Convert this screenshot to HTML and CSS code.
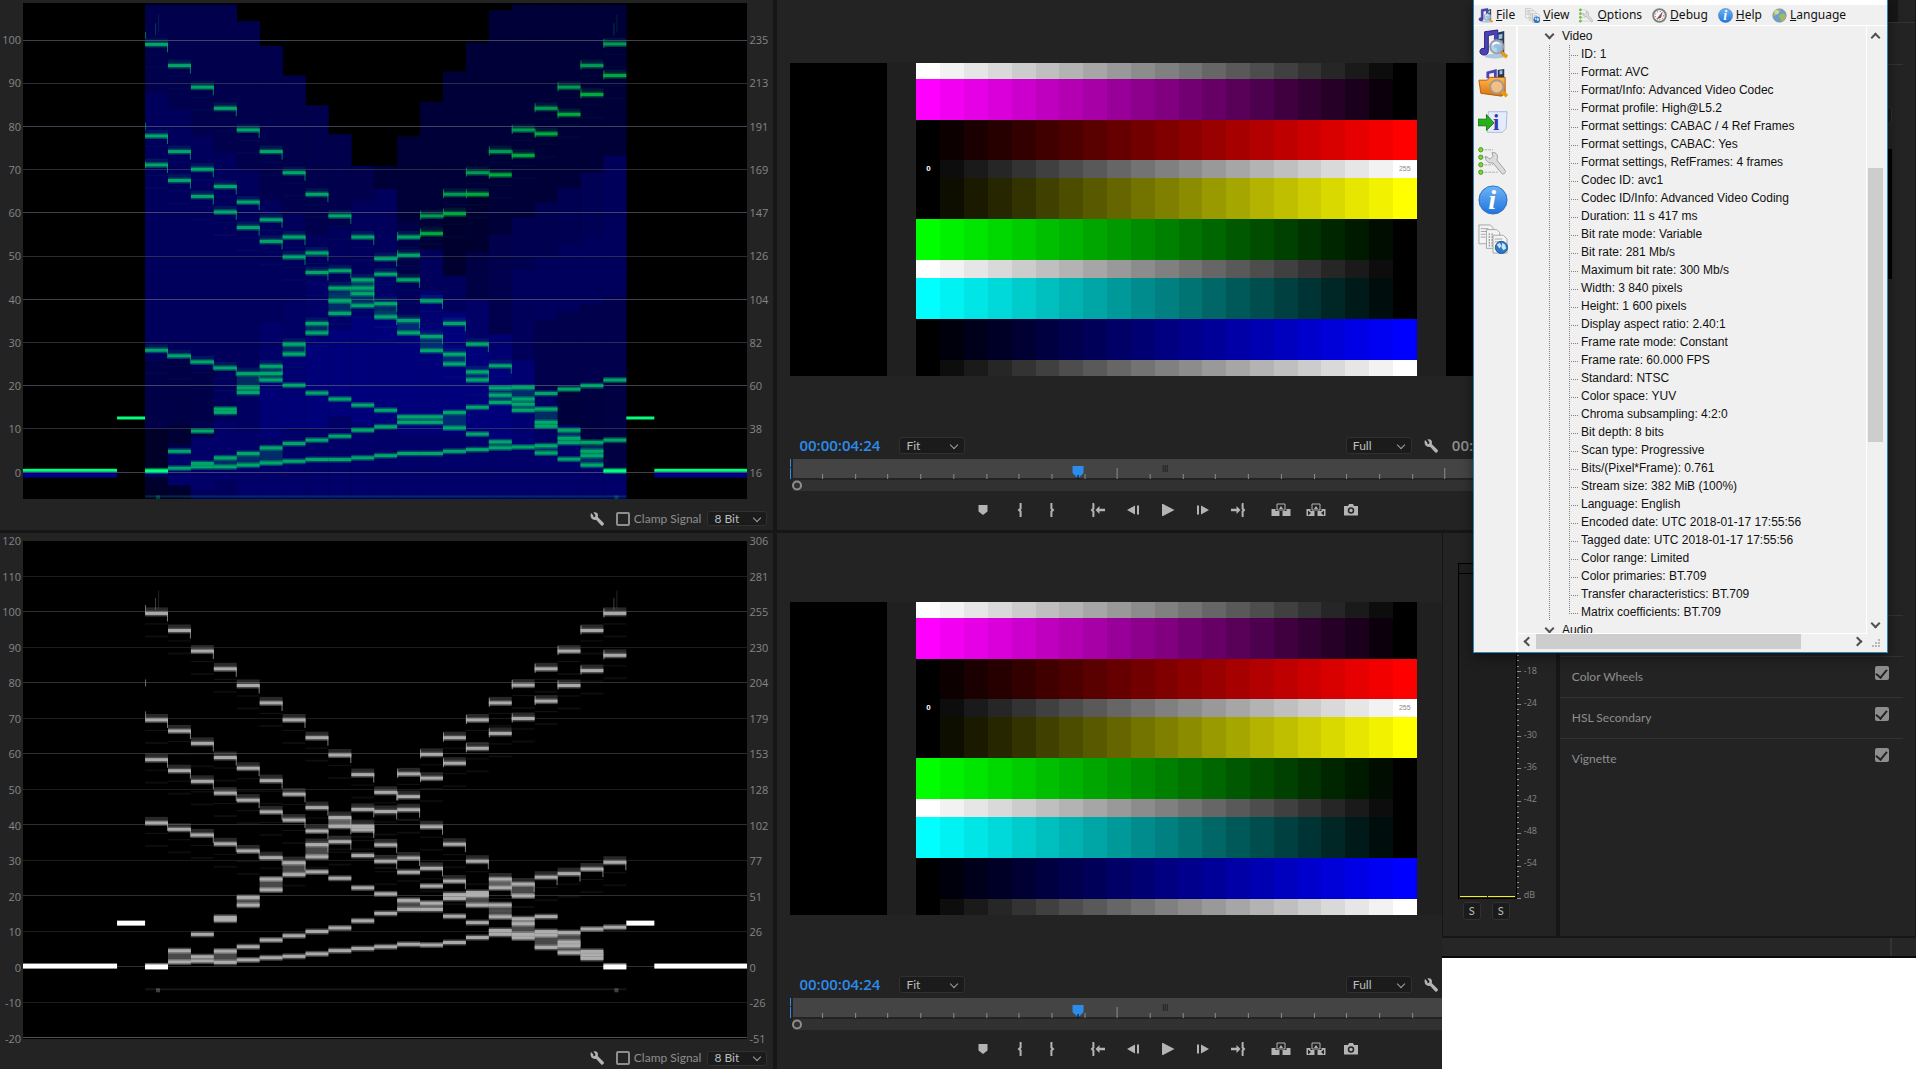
FILE: index.html
```html
<!DOCTYPE html>
<html lang="en">
<head>
<meta charset="utf-8">
<title>Lumetri Scopes</title>
<link rel="stylesheet" href="styles.css">
</head>
<body>
<svg class="defs" aria-hidden="true">
  <defs>
    <linearGradient id="g-blue" x1="0" y1="0" x2="0" y2="1"><stop offset="0" stop-color="#6fb4f5"/><stop offset="1" stop-color="#1f74dd"/></linearGradient>
    <linearGradient id="g-orange" x1="0" y1="0" x2="0" y2="1"><stop offset="0" stop-color="#ffb84d"/><stop offset="1" stop-color="#d9700c"/></linearGradient>
    <symbol id="wrench" viewBox="0 0 14 14"><path d="M1 1 3.200 3.200 3.500 5.200 5.200 4.800 5.400 3 3.400.6C5.500-.2 8 .9 8 3.400c0 .6-.1 1-.3 1.500l6 6.100c.9 1.500-.9 3.300-2.400 2.400L6 7.700C3 8.600.2 6 .6 3.200c0-.8.100-1.500.4-2.200z" fill="#b4b4b4"/></symbol>
    <symbol id="media" viewBox="0 0 32 32">
      <ellipse cx="18" cy="29" rx="11" ry="2.500" fill="#8fb6d8" opacity=".7"/>
      <path d="M20 4l8-2v26l-8-4z" fill="#2b3550"/><path d="M22 6l4-1v5l-4 1zM22 13l4-1v5l-4 1z" fill="#8fc6ec"/>
      <path d="M7 3l14-2v4L11 7v17c0 5-9 5-9 0 0-3 3-4 5-3z" fill="#4a43b8" stroke="#251f75"/>
      <path d="M17 4l4-1v17h-4z" fill="#4a43b8"/>
      <path d="M25 25l6 5" stroke="#e79a17" stroke-width="4"/>
      <circle cx="20" cy="19" r="7" fill="#a9d2ef" fill-opacity=".85" stroke="#9a9ea6" stroke-width="2"/>
      <path d="M16 17c1-3 5-3 6-1" stroke="#fff" stroke-width="2" fill="none"/>
    </symbol>
    <symbol id="folder" viewBox="0 0 32 32">
      <path d="M9 4l11-3v10H9z" fill="#4a43b8"/><path d="M12 6l5-1v6h-5z" fill="#f0f0f0"/><path d="M21 2l7-1v12h-7z" fill="#2b3550"/><path d="M23 3l3-.5v4l-3 .5z" fill="#8fc6ec"/>
      <path d="M1 13h9l2-3h17v17l-4 3L3 27z" fill="url(#g-orange)" stroke="#b35c08"/>
      <path d="M25 25l6 5" stroke="#e79a17" stroke-width="4"/>
      <circle cx="20" cy="20" r="7" fill="#f3c391" fill-opacity=".9" stroke="#a59a8c" stroke-width="2"/>
    </symbol>
    <symbol id="export" viewBox="0 0 32 32">
      <path d="M11 5h20l-1 18-4 4H10z" fill="#e4ecfb" stroke="#a9b7dd"/>
      <text x="16" y="25" font-family="Liberation Serif, serif" font-weight="bold" font-size="24" fill="#3738b0">i</text>
      <path d="M0 13h9V8l8 9-8 8v-5H0z" fill="#27b01c" stroke="#12790d"/>
    </symbol>
    <symbol id="options" viewBox="0 0 32 32">
      <g fill="#7fd23c" stroke="#3d9a16"><circle cx="3" cy="4" r="2.300"/><circle cx="3" cy="12" r="2.300"/><circle cx="3" cy="20" r="2.300"/><circle cx="3" cy="28" r="2.300"/></g>
      <path d="M7 4h9M7 12h4M7 20h9M7 28h14" stroke="#c4c4c4" stroke-width="1.500" stroke-dasharray="3 1"/>
      <path d="M8 11l5 3 3-3-1-4c5-1 7 4 5 8l9 11c1 3-2 5-4 3L16 18c-4 1-9-2-8-7z" fill="#dcdcdc" stroke="#9b9b9b"/>
    </symbol>
    <symbol id="info" viewBox="0 0 32 32">
      <circle cx="16" cy="16" r="15" fill="url(#g-blue)" stroke="#2a6dba"/>
      <text x="11" y="26" font-family="Liberation Serif, serif" font-style="italic" font-weight="bold" font-size="30" fill="#fff">i</text>
    </symbol>
    <symbol id="sheets" viewBox="0 0 32 32">
      <g fill="#f4f4f4" stroke="#a4a4a4"><path d="M1 1h12l3 3v17H1z"/><path d="M9 6h11l3 3v17H9z"/><path d="M16 12h11l4 4v15H16z"/></g>
      <path d="M3 5h8M3 8h6M3 11h5M3 14h5M18 16h8M18 19h6" stroke="#a0a0a0"/><path d="M12 10v14M15 10v14" stroke="#777" stroke-dasharray="2 1"/>
      <circle cx="25" cy="25" r="6.500" fill="#2b79c9" stroke="#1b528e"/><path d="M20 22l3-2 2 3-2 3zM26 20l3 2 1 4-3 2-2-3z" fill="#cfe6f6"/>
    </symbol>
    <symbol id="gauge" viewBox="0 0 32 32">
      <circle cx="16" cy="16" r="13.500" fill="#f7f7f7" stroke="#7d7d7d" stroke-width="4"/>
      <circle cx="16" cy="16" r="9" fill="none" stroke="#555" stroke-width="2" stroke-dasharray="2 4"/><path d="M11 23l10-13-2 10z" fill="#d62c1a" stroke="#444"/>
    </symbol>
    <symbol id="globe" viewBox="0 0 32 32">
      <circle cx="16" cy="16" r="14.500" fill="#6f9dc9" stroke="#73879a"/>
      <path d="M5 8c5-6 12-6 14-4l-4 6-6 2-2 6-5-3zM17 14l9-3 4 7-5 9-6 2-1-7-4-3z" fill="#a5b95c"/><circle cx="10" cy="9" r="5" fill="#fff" opacity=".45"/>
    </symbol>
    <symbol id="t-marker" viewBox="0 0 16 14"><path d="M3.500 2h9v6.500L8 12 3.500 8.500z"/></symbol>
    <symbol id="t-in" viewBox="0 0 16 14"><path d="M9.500.5H8.600V5.500L7 7l1.600 1.500v5h.9" class="ln"/></symbol>
    <symbol id="t-out" viewBox="0 0 16 14"><path d="M6.500.5h.9V5.500L9 7 7.400 8.500v5h-.9" class="ln"/></symbol>
    <symbol id="t-goin" viewBox="0 0 16 14"><path d="M4 .5H3.400V5.500L2 7l1.400 1.500v5H4" class="ln"/><path d="M5.500 7l4-4v2.700H15v2.600H9.500V11z"/></symbol>
    <symbol id="t-back" viewBox="0 0 16 14"><path d="M2 7l8-4.500v9zM12 2.500h2v9h-2z"/></symbol>
    <symbol id="t-play" viewBox="0 0 16 14"><path d="M2 1h1l11.500 6L3 13H2z"/></symbol>
    <symbol id="t-fwd" viewBox="0 0 16 14"><path d="M14 7L6 2.500v9zM2 2.500h2v9H2z"/></symbol>
    <symbol id="t-goout" viewBox="0 0 16 14"><path d="M12 .5h.6V5.500L14 7l-1.400 1.500v5H12" class="ln"/><path d="M10.500 7l-4-4v2.700H1v2.600h5.500V11z"/></symbol>
    <symbol id="t-lift" viewBox="0 0 20 14"><path d="M.5 6h4v2h4v5h-8zM11.500 8h4V6h4v7h-8z"/><path d="M6 1h8v6H6z" fill="none" stroke="#b4b4b4"/><path d="M10 3l2 3H8z"/></symbol>
    <symbol id="t-extract" viewBox="0 0 20 14"><path d="M.5 6h4v2h4v5h-8zM11.500 8h4V6h4v7h-8z"/><path d="M6 1h8v6H6z" fill="none" stroke="#b4b4b4"/><path d="M10 3l2 3H8z"/><path d="M2 7.500l3 2.500-3 2.500zM18 7.500L15 10l3 2.500z" fill="#232323"/></symbol>
    <symbol id="t-camera" viewBox="0 0 16 14"><path d="M1 3h4l1-2h4l1 2h4v9.500H1z"/><circle cx="8" cy="7.500" r="2.500" fill="none" stroke="#232323" stroke-width="1.500"/></symbol>
  </defs>
</svg>

<main class="desk">
  <section class="scope scope-top" aria-label="YC waveform">
    <div class="scale left"><span>100</span><span>90</span><span>80</span><span>70</span><span>60</span><span>50</span><span>40</span><span>30</span><span>20</span><span>10</span><span>0</span></div>
    <svg class="trace" id="trace-yc" viewBox="0 0 724 496" preserveAspectRatio="none"></svg>
    <div class="scale right"><span>235</span><span>213</span><span>191</span><span>169</span><span>147</span><span>126</span><span>104</span><span>82</span><span>60</span><span>38</span><span>16</span></div>
    <div class="scope-foot">
      <button class="icon" aria-label="Settings"><svg><use href="#wrench"/></svg></button>
      <label class="clamp"><input type="checkbox" class="box">Clamp Signal</label>
      <span class="drop small"><select aria-label="Bit depth"><option>8 Bit</option></select></span>
    </div>
  </section>

  <section class="monitor monitor-top" aria-label="Source monitor">
    <div class="monitor-body">
      <div class="viewer"><i class="black"></i><i></i><div class="chart"></div><i></i><i class="black"></i></div>
      <div class="controls">
        <span class="time">00:00:04:24</span>
        <span class="drop"><select aria-label="Zoom level"><option>Fit</option></select></span>
        <span class="drop push"><select aria-label="Playback resolution"><option>Full</option></select></span>
        <button class="icon" aria-label="Monitor settings"><svg><use href="#wrench"/></svg></button>
        <span class="time total">00:00:11:25</span>
      </div>
      <svg class="ruler" viewBox="0 0 751 32" preserveAspectRatio="none"></svg>
      <div class="transport"></div>
    </div>
  </section>

  <section class="scope scope-bottom" aria-label="Luma waveform">
    <div class="scale left"><span>120</span><span>110</span><span>100</span><span>90</span><span>80</span><span>70</span><span>60</span><span>50</span><span>40</span><span>30</span><span>20</span><span>10</span><span>0</span><span>-10</span><span>-20</span></div>
    <svg class="trace" id="trace-luma" viewBox="0 0 724 498" preserveAspectRatio="none"></svg>
    <div class="scale right"><span>306</span><span>281</span><span>255</span><span>230</span><span>204</span><span>179</span><span>153</span><span>128</span><span>102</span><span>77</span><span>51</span><span>26</span><span>0</span><span>-26</span><span>-51</span></div>
    <div class="scope-foot">
      <button class="icon" aria-label="Settings"><svg><use href="#wrench"/></svg></button>
      <label class="clamp"><input type="checkbox" class="box">Clamp Signal</label>
      <span class="drop small"><select aria-label="Bit depth"><option>8 Bit</option></select></span>
    </div>
  </section>

  <section class="monitor monitor-bottom" aria-label="Program monitor">
    <div class="monitor-body">
      <div class="viewer"><i class="black"></i><i></i><div class="chart"></div><i></i><i class="black"></i></div>
      <div class="controls">
        <span class="time">00:00:04:24</span>
        <span class="drop"><select aria-label="Zoom level"><option>Fit</option></select></span>
        <span class="drop push"><select aria-label="Playback resolution"><option>Full</option></select></span>
        <button class="icon" aria-label="Monitor settings"><svg><use href="#wrench"/></svg></button>
        <span class="time total"></span>
      </div>
      <svg class="ruler" viewBox="0 0 751 32" preserveAspectRatio="none"></svg>
      <div class="transport"></div>
    </div>
  </section>

  <section class="audio" aria-label="Audio meters">
    <div class="meter"><i></i><i></i></div>
    <svg class="meter-ticks" viewBox="0 0 5 336"></svg>
    <div class="meter-scale"><span></span><span></span><span></span><span>-18</span><span>-24</span><span>-30</span><span>-36</span><span>-42</span><span>-48</span><span>-54</span><span>dB</span></div>
    <div class="solo"><button>S</button><button>S</button></div>
  </section>

  <section class="lumetri" aria-label="Lumetri Color">
    <div class="lumetri-tabs"></div>
    <div class="lumetri-source"></div>
    <div class="lumetri-preset"></div>
    <div class="lumetri-wheel"></div>
    <div class="sections">
      <div class="section"></div>
      <div class="section"></div>
      <label class="section">Color Wheels<input type="checkbox" class="box" checked></label>
      <label class="section">HSL Secondary<input type="checkbox" class="box" checked></label>
      <label class="section">Vignette<input type="checkbox" class="box" checked></label>
    </div>
  </section>
  <div class="status"><i></i></div>
</main>

<div class="window" role="dialog" aria-label="MediaInfo">
  <div class="titlebar"></div>
  <nav class="menu">
    <button><svg><use href="#media"/></svg><span><u>F</u>ile</span></button>
    <button><svg><use href="#sheets"/></svg><span><u>V</u>iew</span></button>
    <button><svg><use href="#options"/></svg><span><u>O</u>ptions</span></button>
    <button><svg><use href="#gauge"/></svg><span><u>D</u>ebug</span></button>
    <button><svg><use href="#info"/></svg><span><u>H</u>elp</span></button>
    <button><svg><use href="#globe"/></svg><span><u>L</u>anguage</span></button>
  </nav>
  <div class="window-body">
    <div class="tools">
      <button aria-label="Open file"><svg><use href="#media"/></svg></button>
      <button aria-label="Open folder"><svg><use href="#folder"/></svg></button>
      <button aria-label="Export"><svg><use href="#export"/></svg></button>
      <button aria-label="Options"><svg><use href="#options"/></svg></button>
      <button aria-label="About"><svg><use href="#info"/></svg></button>
      <button aria-label="View"><svg><use href="#sheets"/></svg></button>
    </div>
    <div class="pane">
      <div class="tree">
        <div class="branch"><i class="chev down"></i>Video</div>
        <div class="trunk">
          <ul>
            <li>ID: 1</li>
            <li>Format: AVC</li>
            <li>Format/Info: Advanced Video Codec</li>
            <li>Format profile: High@L5.2</li>
            <li>Format settings: CABAC / 4 Ref Frames</li>
            <li>Format settings, CABAC: Yes</li>
            <li>Format settings, RefFrames: 4 frames</li>
            <li>Codec ID: avc1</li>
            <li>Codec ID/Info: Advanced Video Coding</li>
            <li>Duration: 11 s 417 ms</li>
            <li>Bit rate mode: Variable</li>
            <li>Bit rate: 281 Mb/s</li>
            <li>Maximum bit rate: 300 Mb/s</li>
            <li>Width: 3 840 pixels</li>
            <li>Height: 1 600 pixels</li>
            <li>Display aspect ratio: 2.40:1</li>
            <li>Frame rate mode: Constant</li>
            <li>Frame rate: 60.000 FPS</li>
            <li>Standard: NTSC</li>
            <li>Color space: YUV</li>
            <li>Chroma subsampling: 4:2:0</li>
            <li>Bit depth: 8 bits</li>
            <li>Scan type: Progressive</li>
            <li>Bits/(Pixel*Frame): 0.761</li>
            <li>Stream size: 382 MiB (100%)</li>
            <li>Language: English</li>
            <li>Encoded date: UTC 2018-01-17 17:55:56</li>
            <li>Tagged date: UTC 2018-01-17 17:55:56</li>
            <li>Color range: Limited</li>
            <li>Color primaries: BT.709</li>
            <li>Transfer characteristics: BT.709</li>
            <li>Matrix coefficients: BT.709</li>
          </ul>
        </div>
        <div class="branch"><i class="chev down"></i>Audio</div>
      </div>
      <div class="vbar"><i class="chev up"></i><i class="chev down"></i></div>
      <div class="hbar"><i class="chev prev"></i><i class="thumb"></i><i class="chev next"></i></div>
      <svg class="grip" viewBox="0 0 9 9"><path d="M6 0h2v2H6zM3 3h2v2H3zM6 3h2v2H6zM0 6h2v2H0zM3 6h2v2H3zM6 6h2v2H6z" fill="#b9b9b9"/></svg>
    </div>
  </div>
</div>
<script src="script.js"></script>
</body>
</html>
```
FILE: styles.css
```css
* { box-sizing: border-box; }

body {
  position: relative;
  margin: 0;
  min-height: 100vh;
  background: #fff;
  color: #8e8e8e;
  font: 12px/14px Lato, "Open Sans", sans-serif;
}

button, select, input { margin: 0; padding: 0; border: 0; font: inherit; color: inherit; background: none; }
ul { margin: 0; padding: 0; list-style: none; }
.defs { display: block; width: 0; height: 0; }

.desk {
  display: grid;
  grid-template-columns: 773fr 4px 664fr 1px 113fr 4px 356fr;
  grid-template-rows: 530px 3px 403px 2px 20px auto;
  padding-right: 4px;
  background: linear-gradient(#161616, #161616) 0 0 / calc(100% - 4px) 958px no-repeat;
}

.scope, .monitor, .audio, .lumetri { background: #232323; }

/* scopes */
.scope {
  grid-column: 1;
  display: grid;
  grid-template-columns: 23px 1fr 26px;
  box-shadow: 4px 0 #161616;
}
.scope-top { grid-row: 1; padding-top: 3px; }
.scope-bottom { grid-row: 3 / 7; padding-top: 8px; }
.trace { display: block; width: 100%; height: 496px; background: #000; }
.scope-bottom .trace { height: 498px; }
.scale {
  display: flex;
  flex-direction: column;
  justify-content: space-between;
  font: 11px/14px "Open Sans", sans-serif;
  color: #858585;
}
.scale.left { padding-right: 2px; text-align: right; margin-left: -4px; }
.scale.right { padding-left: 2px; }
.scope-top .scale { padding: 30px 2px 20px; }
.scope-bottom .scale { margin-top: -7px; margin-bottom: -7px; }
.scope-foot {
  grid-column: 1 / 4;
  display: flex;
  align-items: center;
  justify-content: flex-end;
  height: 30px;
  padding: 8px 6px 0 0;
}
.clamp { display: flex; align-items: center; gap: 4px; margin: 0 6px 0 12px; }
.icon { width: 14px; height: 14px; }
.icon svg { display: block; width: 14px; height: 14px; }

.box {
  display: grid;
  place-items: center;
  width: 14px;
  height: 14px;
  appearance: none;
  border: 2px solid #8e8e8e;
  border-radius: 2px;
}
.box:checked { background: #8e8e8e; }
.box:checked::before {
  content: "";
  width: 5px;
  height: 9px;
  border: solid #232323;
  border-width: 0 2px 2px 0;
  transform: translateY(-1px) rotate(40deg);
}

.drop {
  display: flex;
  align-items: center;
  justify-content: space-between;
  width: 66px;
  height: 17px;
  padding: 0 7px 0 6px;
  border: 1px solid #303030;
  border-radius: 3px;
  background: #1b1b1b;
  color: #bdbdbd;
}
.drop.small { width: 60px; height: 15px; padding-right: 6px; }
.drop select { flex: 1; appearance: none; height: 14px; line-height: 14px; }
.drop::after {
  content: "";
  width: 5px;
  height: 5px;
  border: solid #a0a0a0;
  border-width: 0 1px 1px 0;
  transform: translateY(-1px) rotate(45deg);
}

/* monitors */
.monitor { overflow: hidden; }
.monitor-top { grid-row: 1; grid-column: 3 / 6; padding-top: 63px; }
.monitor-bottom { grid-row: 3 / 7; grid-column: 3; padding-top: 69px; }
.monitor-body { padding: 0 13px; }
.monitor-bottom .monitor-body { width: calc(100% * 778 / 664); }
.viewer {
  display: grid;
  grid-template-columns: 97fr 29fr 500fr 29fr 97fr;
  height: 313px;
  background: #202020;
}
.viewer .black { background: #000; }
.chart { display: grid; grid-template-rows: 16fr 41fr 40fr 18fr 41fr 41fr 18fr 41fr 41fr 16fr; }
.chart-row { display: grid; grid-template-columns: repeat(21, 1fr); }
.chart-row span {
  display: grid;
  place-items: center;
  font: 7px/8px "Liberation Sans", sans-serif;
}
.chart-row .dark { color: #8a8a8a; }
.chart-row .lit { color: #fff; font-weight: bold; font-size: 8px; }

.controls {
  display: flex;
  align-items: center;
  height: 17px;
  margin-top: 61px;
  padding: 0 11px 0 9px;
}
.time { width: 80px; margin-right: 20px; font: 600 15px/17px "Open Sans", sans-serif; color: #2d8ceb; }
.time.total { margin: 0 0 0 14px; color: #8e8e8e; }
.push { margin: 0 12px 0 auto; }
.ruler { display: block; width: 100%; height: 32px; margin-top: 5px; }
.transport { display: flex; align-items: center; justify-content: center; height: 37px; }
.transport .set { display: flex; }
.transport .set + .set { margin-left: 12px; }
.transport .set:nth-child(2) { margin-left: 4px; }
.transport .set:nth-child(4) { margin-left: 8px; }
.transport button { display: grid; place-items: center; width: 35px; height: 14px; }
.transport .set:nth-child(2) button { width: 32px; }
.transport svg { display: block; width: 16px; height: 14px; fill: #b4b4b4; }
.transport .wide svg { width: 20px; }
.ln { fill: none; stroke: #b4b4b4; stroke-width: 2px; }

/* audio meters */
.audio {
  grid-row: 3;
  grid-column: 5;
  display: grid;
  grid-template-columns: 59px 5px 1fr;
  grid-template-rows: 336px 25px;
  padding: 30px 0 0 15px;
}
.meter {
  display: flex;
  align-items: flex-end;
  gap: 1px;
  padding: 0 1px 1px;
  border: 1px solid #000;
  background: linear-gradient(#000, #000) 0 9px / 100% 1px no-repeat #1e1e1e;
}
.meter i { flex: 1; height: 1px; background: #f2f20c; }
.meter-ticks { width: 5px; height: 336px; }
.meter-scale {
  display: flex;
  flex-direction: column;
  justify-content: space-between;
  padding: 6px 0 0 2px;
  height: 338px;
  font: 9px/12px "Open Sans", sans-serif;
  color: #858585;
}
.meter-scale span { height: 12px; }
.solo { display: flex; gap: 11px; padding: 3px 0 0 5px; grid-column: 1 / 4; }
.solo button {
  width: 18px;
  height: 18px;
  border: 1px solid #303030;
  border-radius: 3px;
  background: #1b1b1b;
  font-size: 11px;
  color: #bdbdbd;
}

/* lumetri */
.lumetri { grid-row: 1 / 4; grid-column: 7; margin-right: 1px; }
.lumetri-tabs { height: 23px; border-bottom: 1px solid #343434; background: linear-gradient(#161616, #161616) 0 0 / calc(100% - 17px) 100% no-repeat; }
.lumetri-source { height: 42px; margin-right: 12px; border-bottom: 1px solid #343434; }
.lumetri-preset { height: 17px; margin: 42px 23px 0 0; border: 1px solid #303030; border-radius: 3px; background: #1b1b1b; }
.lumetri-wheel { height: 130px; margin: 25px 23px 0 0; background: #000; }
.sections { padding: 335px 12px 0 0; }
.section {
  display: flex;
  align-items: center;
  justify-content: space-between;
  height: 41px;
  padding: 0 14px 0 12px;
  border-top: 1px solid #323232;
}
.section .box { transform: translateY(-4px); }
.section:first-child { visibility: hidden; height: 0; }
.status {
  grid-row: 5;
  grid-column: 4 / 8;
  display: flex;
  justify-content: flex-end;
  padding-right: 24px;
  border-bottom: 2px solid #080808;
  background: #262626;
}
.status i { width: 2px; background: #343434; }

/* floating window */
.window {
  position: absolute;
  top: 0;
  left: 76.72%;
  width: 415px;
  height: 653px;
  display: flex;
  flex-direction: column;
  border: 1px solid #2a86b8;
  border-top: 0;
  background: #f0f0f0;
  color: #101010;
  box-shadow: 0 4px 12px rgba(0, 0, 0, .45);
}
.titlebar { height: 5px; background: #fff; }
.menu {
  display: flex;
  gap: 10px;
  height: 21px;
  padding: 0 4px;
  border-bottom: 1px solid #fff;
  font: 12px/20px "Noto Sans", sans-serif;
}
.menu button { display: flex; align-items: center; gap: 3px; }
.menu svg { width: 15px; height: 15px; }
.window-body { flex: 1; display: flex; min-height: 0; }
.tools { display: flex; flex-direction: column; width: 44px; border-right: 2px solid #fff; }
.tools button { display: grid; align-items: start; justify-items: center; padding-top: 3px; width: 38px; height: 39px; }
.tools svg { width: 30px; height: 30px; }
.pane {
  flex: 1;
  display: grid;
  grid-template-columns: 1fr 18px;
  grid-template-rows: 1fr 18px;
  min-width: 0;
  min-height: 0;
  padding-right: 2px;
}
.tree {
  overflow: hidden;
  min-height: 0;
  padding-top: 1px;
  border-right: 1px solid #fff;
  border-bottom: 1px solid #fff;
  font: 12px/18px "Liberation Sans", sans-serif;
}
.branch { display: flex; align-items: center; gap: 8px; height: 18px; padding-left: 27px; }
.trunk { padding-left: 51px; background: repeating-linear-gradient(#808080 0 1px, transparent 1px 2px) 31px 0 / 1px 100% no-repeat; }
.trunk li {
  height: 18px;
  padding-left: 12px;
  white-space: nowrap;
  background:
    repeating-linear-gradient(#808080 0 1px, transparent 1px 2px) 0 0 / 1px 100% no-repeat,
    repeating-linear-gradient(90deg, #808080 0 1px, transparent 1px 2px) 0 10px / 9px 1px no-repeat;
}
.trunk li:last-child { background-size: 1px 10px, 9px 1px; }
.chev { display: block; flex: none; width: 7px; height: 7px; border: solid #505050; border-width: 0 2px 2px 0; }
.branch .chev { margin: 0 1px; }
.down { transform: translateY(-2px) rotate(45deg); }
.up { transform: translateY(2px) rotate(225deg); }
.prev { transform: rotate(135deg); }
.next { transform: rotate(-45deg); }
.vbar {
  display: flex;
  flex-direction: column;
  justify-content: space-between;
  align-items: center;
  padding: 6px 2px 5px 0;
  background: linear-gradient(#cdcdcd, #cdcdcd) 1px 142px / 15px 274px no-repeat;
}
.hbar { display: flex; align-items: center; gap: 4px; padding: 0 6px 3px 7px; }
.hbar .thumb { width: 265px; height: 15px; background: #cdcdcd; }
.hbar .next { margin-left: auto; }
.grip { width: 9px; height: 9px; margin: 5px 0 0 5px; }
```
FILE: script.js
```js
const NS = 'http://www.w3.org/2000/svg';
const COLS = 21;
const X0 = 122;
const STEP = 481 / COLS;

function rect(svg, x, y, w, h, fill, opacity = 1) {
  const r = document.createElementNS(NS, 'rect');
  Object.entries({ x, y, width: w, height: h, fill, 'fill-opacity': opacity }).forEach(([k, v]) => r.setAttribute(k, v));
  svg.appendChild(r);
}

/* levels of each step of the test chart, in IRE */
const YC = [
  [99.1, 77.9, 71.2, 28.3, 0.4], [94.2, 74.3, 67.6, 27, 4.9, 1], [89.2, 70.2, 63.9, 25.6, 9.6, 2.1, 1.3],
  [84.3, 66.2, 60.3, 24.2, 14.7, 13.9, 3.4, 1.3], [79.3, 62.6, 56.7, 22.9, 19.6, 18.5, 4.4, 1.7],
  [74.3, 58.5, 53.5, 24.6, 22.9, 21.4, 5.7, 2.2], [69.4, 54.5, 49.9, 29.7, 27.4, 20.2, 6.7, 2.6],
  [64.4, 50.8, 46.3, 34.5, 32.3, 18.4, 7.5, 3], [59.4, 46.7, 42.7, 39.7, 36.8, 17, 8.4, 3],
  [54.5, 44.6, 42.7, 41.4, 38.6, 15.6, 9.8, 3.4], [49.5, 45.9, 39.1, 36, 14.4, 10.6, 3.9],
  [54.5, 50.3, 44.6, 35.2, 32.3, 12.9, 11.6, 4.4], [59.4, 55.3, 39.7, 31.5, 28.2, 12.9, 11.6, 4.4],
  [64.4, 59.9, 34.5, 27.4, 25.1, 13.9, 10.3, 4.9], [69.4, 64.4, 29.7, 23.3, 21.4, 15.1, 8.9, 5.3],
  [74.3, 68.9, 24.7, 19.6, 17.9, 16.2, 7.1, 5.7], [79.3, 73.4, 19.7, 17, 15.8, 14.4, 5.9],
  [84.3, 78.4, 18.3, 14.7, 11.6, 10.7, 6.2, 4.5], [89.2, 82.9, 19.3, 9.8, 7.9, 6.9, 3.1],
  [94.2, 87.5, 20.1, 7, 4.9, 3.9, 1.7], [99.2, 91.9, 21.4, 7.5, 0.4]
];
const LUMA = [
  [99.6, 69.6, 58.4, 40.6, 0.3], [94.8, 66.5, 55.3, 38.8, 4.6, 1.4], [89, 63, 52.3, 37.2, 9.2, 2.9, 1.7],
  [84, 59, 49, 34.7, 14, 13.2, 4.5, 1.3], [79.3, 56, 47, 32.7, 19.6, 17.4, 5.7, 2],
  [74.4, 52.5, 43.7, 30.8, 24.8, 21.7, 7.6, 2.6], [69.6, 48.7, 41.4, 29.4, 26, 8.8, 3],
  [64.6, 44.9, 38.3, 34.5, 31, 26.8, 10, 3.7], [59.7, 42.1, 39.6, 35.3, 25, 11, 4.6],
  [54.2, 44.4, 39.6, 38.6, 31.4, 22.3, 13, 5.2], [49.2, 43.8, 34.4, 29.8, 20.6, 15.1, 5.7],
  [54.4, 48, 44.3, 30.7, 26.7, 18.8, 16.2, 6.4], [59.9, 53.2, 39.5, 27.8, 22.8, 18, 16.2, 6.2],
  [64.6, 57.4, 34.6, 24.2, 20.4, 19.3, 14.3, 6.9], [69.6, 61.6, 29.8, 21, 20.2, 17.4, 12.5, 8.3],
  [74.4, 65.8, 24.8, 22.3, 17.5, 14.1, 10.3, 9.2], [79.4, 70, 23.4, 20, 13.6, 12.2, 9.2, 8.2],
  [84, 74.9, 25.3, 14.2, 10, 9, 5.5], [89, 79.3, 26.3, 9.7, 7, 6, 4],
  [94.8, 83.5, 27.6, 10.7, 4.4, 3.4, 2.4], [99.6, 87.8, 29.5, 11.2, 0.3]
];

/* chroma fill per column: [upper limit, colour] pairs, top to bottom */
const A = '#00004c', B = '#00005c', C = '#00007a', D = '#000038', E = '#000068';
const CHROMA = [
  [[108.3, A], [88, B], [26, '#000048'], [10, '#000028'], [0, E], [-1, '#00002c']],
  [[108.3, A], [84, B], [26, '#000046'], [11, '#000034'], [6, E], [-3, '#000030']],
  [[108.3, A], [78, B], [24, '#000048'], [12, '#00004c'], [8, E], [-4, B]],
  [[108.3, A], [74, B], [16, '#000058'], [12, E], [-2, B]],
  [[104.5, A], [70, B], [20, '#000060'], [10, E]],
  [[98.7, A], [63, B], [35, E], [22, '#000074'], [8, E]],
  [[91.9, A], [60, B], [40, '#000064'], [27, '#000070'], [18, '#000076'], [10, E]],
  [[85, A], [55, B], [45, '#000066'], [31, '#000078'], [10, E]],
  [[78.3, A], [57, B], [42, '#000068'], [33, C], [13, E]],
  [[71, A], [63, B], [45, '#00006a'], [36, C], [11, E]],
  [[71, D], [65.6, B], [47, '#000066'], [37, C], [10, E]],
  [[77.8, D], [58, '#000048'], [44, B], [36, C], [9, E]],
  [[85.8, D], [51.5, B], [42, '#000070'], [34, C], [9, E]],
  [[92.8, D], [59, '#00002e'], [45.5, B], [37, C], [9, E]],
  [[99.5, D], [64, '#000030'], [51, '#000044'], [40, '#000066'], [29, C], [8, E]],
  [[107, D], [55, '#00004c'], [32, '#000070'], [24, C], [7, E]],
  [[108.3, D], [59, '#000050'], [47, B], [38, '#00005a'], [26, '#000070'], [6, E]],
  [[108.3, D], [62.4, '#000050'], [50, B], [35, A], [19, '#000062'], [6, E]],
  [[108.3, D], [66, '#000052'], [52.5, B], [37, A], [19, '#00003c'], [11, E]],
  [[108.3, D], [69.5, '#000054'], [55, B], [39, A], [19, '#000040'], [6, E]],
  [[108.3, D], [73.4, '#00005a'], [58.5, B], [40.7, A], [21, '#000042'], [0, E]]
];

function drawTrace(svg, levels, cfg) {
  const y = v => cfg.zero - v * cfg.unit;
  if (cfg.fill) {
    cfg.fill.forEach((stops, c) => stops.forEach(([top, color], i) => {
      const bottom = i + 1 < stops.length ? y(stops[i + 1][0]) : cfg.height;
      rect(svg, X0 + c * STEP, y(top), STEP + .3, bottom - y(top) + .3, color);
    }));
    rect(svg, 0, y(0) - 1, 94, 6, '#000087');
    rect(svg, 631, y(0) - 1, 93, 6, '#000087');
  }
  cfg.lines.forEach(([v, color]) => rect(svg, 0, Math.round(y(v)) - 1, 724, 1, color, cfg.lineOpacity));
  levels.forEach((column, c) => {
    const x = X0 + c * STEP;
    column.forEach((v, i) => {
      const edge = v < .5;
      const color = edge ? cfg.peak : cfg.color(c, i);
      const next = column[i + 1];
      if (next && v - next < 3.600 && v > 3) rect(svg, x, y(v), STEP, y(next) - y(v), color, cfg.join);
      rect(svg, x, y(v) - 3, STEP, 6, color, .4);
      rect(svg, x, y(v) - 1.500, STEP, edge ? cfg.edge : 3, color, edge ? 1 : .9);
      if (i < 4 && v > 22) {
        const rising = c > 10 && i < 2;
        rect(svg, rising ? x : x + STEP - 1, y(v) - (rising ? 5 : 1), 1, 9, color, .7);
        rect(svg, x, y(v) - 6, STEP, 3, color, cfg.haze);
        rect(svg, x, y(v) + 10, STEP, 1, color, cfg.haze / 2);
        rect(svg, x, y(v) + 22, STEP, 2, color, cfg.haze / 3);
      }
    });
    rect(svg, x, y(cfg.floor), STEP, 2, cfg.color(0, 0), cfg.floorOpacity);
  });
  [0, 20].forEach(c => {
    const x = X0 + c * STEP + 10;
    rect(svg, x, y(104), 1, 12, cfg.color(c, 0), .35);
    rect(svg, x + 3, y(106), 1, 18, cfg.color(c, 0), .2);
    rect(svg, x + 1, y(cfg.floor), 4, 4, cfg.color(c, 0), .35);
  });
  [102, 81, 72].forEach(v => rect(svg, X0, y(v), 1, 7, cfg.color(0, 0), .6));
  [[0, 94, .4], [94, 28, 12.500], [603, 28, 12.500], [631, 93, .4]].forEach(([x, w, v]) => {
    rect(svg, x, y(v) - 2, w, cfg.edge, cfg.peak);
  });
}

drawTrace(document.getElementById('trace-yc'), YC, {
  zero: 469.500, unit: 4.320, height: 496, fill: CHROMA, peak: '#00ff7c', edge: 3, haze: .12, join: .25, floor: -5.300, floorOpacity: .25,
  lineOpacity: .6,
  lines: [100, 90, 80, 70, 60, 50, 40, 30, 20, 10, 0].map(v => [v, v % 20 ? '#484858' : '#6c6c80']),
  color: (c, i) => (c > 11 && i === 1 ? '#00b43c' : c > 11 && i === 0 ? '#00a452' : '#00b068')
});
drawTrace(document.getElementById('trace-luma'), LUMA, {
  zero: 426, unit: 3.550, height: 498, peak: '#ffffff', edge: 5, haze: .22, join: .4, floor: -6, floorOpacity: .12,
  lineOpacity: 1,
  lines: Array.from({ length: 15 }, (_, k) => 120 - k * 10).map(v => [v, v === 120 || v === -20 ? '#505050' : v % 20 ? '#1c1c1c' : '#303030']),
  color: () => '#b4b4b4'
});

/* step chart: [red, green, blue, rising?] */
const BANDS = [
  [1, 1, 1, 0], [1, 0, 1, 0], [1, 0, 0, 1], [1, 1, 1, 1], [1, 1, 0, 1],
  [0, 1, 0, 0], [1, 1, 1, 0], [0, 1, 1, 0], [0, 0, 1, 1], [1, 1, 1, 1]
];
document.querySelectorAll('.chart').forEach(chart => {
  BANDS.forEach(([r, g, b, rising], n) => {
    const row = document.createElement('div');
    row.className = 'chart-row';
    for (let c = 0; c < COLS; c++) {
      const v = Math.round(255 * (rising ? c : COLS - 1 - c) / (COLS - 1));
      const cell = document.createElement('span');
      cell.style.background = `rgb(${r * v},${g * v},${b * v})`;
      if (n === 3 && c === 0) { cell.textContent = '0'; cell.className = 'lit'; }
      if (n === 3 && c === COLS - 1) { cell.textContent = '255'; cell.className = 'dark'; }
      row.appendChild(cell);
    }
    chart.appendChild(row);
  });
});

document.querySelectorAll('.ruler').forEach(svg => {
  rect(svg, 3, 0, 748, 19, '#444444');
  rect(svg, 3, 21, 748, 11, '#313131');
  for (let k = 0; k < 22; k++) {
    const tall = k % 10 === 9;
    rect(svg, Math.round(32 + k * 32.700), tall ? 9 : 15, 1, tall ? 11 : 5, '#8c8c8c');
  }
  rect(svg, 0, 0, 1, 8, '#2d8ceb');
  rect(svg, 0, 9, 1, 11, '#2d8ceb');
  [372, 374, 376].forEach(x => rect(svg, x, 6, 1, 7, '#222222'));
  svg.insertAdjacentHTML('beforeend',
    '<path d="M282 7h11v7l-5 5h-1l-5-5z" fill="#2d8ceb"/><path d="M287 16h1v4h-1z" fill="#000"/>' +
    '<circle cx="7" cy="26.500" r="4" fill="none" stroke="#8e8e8e" stroke-width="2"/>');
});

const SETS = [
  [['marker', 'Add marker']],
  [['in', 'Mark in'], ['out', 'Mark out']],
  [['goin', 'Go to in'], ['back', 'Step back'], ['play', 'Play'], ['fwd', 'Step forward'], ['goout', 'Go to out']],
  [['lift', 'Lift', 1], ['extract', 'Extract', 1], ['camera', 'Export frame']]
];
document.querySelectorAll('.transport').forEach(bar => {
  bar.innerHTML = SETS.map(set => `<div class="set">${set.map(([id, name, wide]) =>
    `<button aria-label="${name}"${wide ? ' class="wide"' : ''}><svg><use href="#t-${id}"/></svg></button>`).join('')}</div>`).join('');
});

const ticks = document.querySelector('.meter-ticks');
for (let k = 0; k <= 60; k++) rect(ticks, 0, Math.round(11 + k * 5.400), k % 6 ? 2 : 4, 1, '#8e8e8e');
```
